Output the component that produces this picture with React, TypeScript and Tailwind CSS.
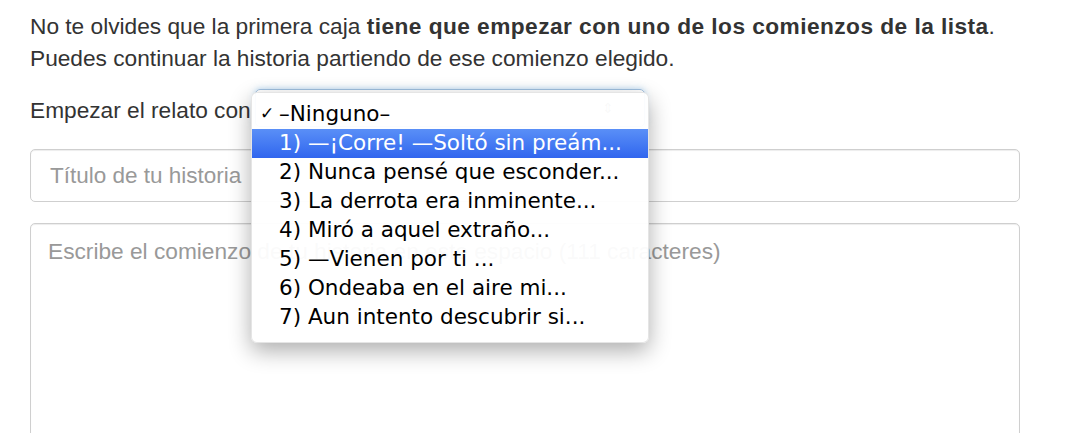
import React from "react";

const items = [
  "1) —¡Corre! —Soltó sin preám...",
  "2) Nunca pensé que esconder...",
  "3) La derrota era inminente...",
  "4) Miró a aquel extraño...",
  "5) —Vienen por ti ...",
  "6) Ondeaba en el aire mi...",
  "7) Aun intento descubrir si...",
];

export default function App() {
  return (
    <div className="relative w-[1091px] h-[433px] overflow-hidden bg-white font-['Helvetica_Neue','Liberation_Sans',Arial,sans-serif] text-[#333]">
      <div className="pl-[30px] pt-[10px] w-[1020px]">
        <p className="text-[22.7px] leading-[32px]">
          No te olvides que la primera caja{" "}
          <b className="font-bold tracking-[0.45px]">tiene que empezar con uno de los comienzos de la lista</b>.
          <br />
          Puedes continuar la historia partiendo de ese comienzo elegido.
        </p>

        <div className="mt-[15px] flex items-center h-[38px] text-[22.7px]">
          <span className="mt-[5px]">Empezar el relato con</span>
          <div className="ml-[4px] w-[390px] h-[38px] rounded-[5px] border border-[#9fbfdf] shadow-[0_0_6px_rgba(102,175,233,0.5)] flex items-center justify-end pr-[30px] text-[#888] text-[14px]">
            ⇕
          </div>
        </div>

        <div className="mt-[22px] h-[53px] w-[990px] rounded-[5px] border border-[#cfcfcf] shadow-[inset_0_1px_1px_rgba(0,0,0,0.075)] flex items-center pl-[19px] text-[22.5px] text-[#999]">
          Título de tu historia
        </div>

        <div className="mt-[21px] h-[260px] w-[990px] rounded-[5px] border border-[#cfcfcf] shadow-[inset_0_1px_1px_rgba(0,0,0,0.075)] pl-[17px] pt-[11px] text-[22.7px] leading-[32px] text-[#999]">
          Escribe el comienzo de tu historia en este espacio (111 caracteres)
        </div>
      </div>

      <div className="absolute left-[251px] top-[92px] w-[398px] pt-[6px] pb-[10px] rounded-[6px] bg-white/95 border border-black/10 shadow-[0_8px_22px_rgba(0,0,0,0.32)] font-['DejaVu_Sans',sans-serif] text-[21.5px] text-black">
        <div className="relative h-[30px] flex items-center pl-[27px]">
          <span className="absolute left-[8px] text-[17px]">✓</span>
          <span>–Ninguno–</span>
        </div>
        {items.map((t, i) => (
          <div
            key={t}
            className={
              i === 0
                ? "h-[29px] flex items-center pl-[27px] text-white bg-linear-to-b from-[#5a8ff7] to-[#3165ee]"
                : "h-[29px] flex items-center pl-[27px]"
            }
          >
            {t}
          </div>
        ))}
      </div>
    </div>
  );
}
